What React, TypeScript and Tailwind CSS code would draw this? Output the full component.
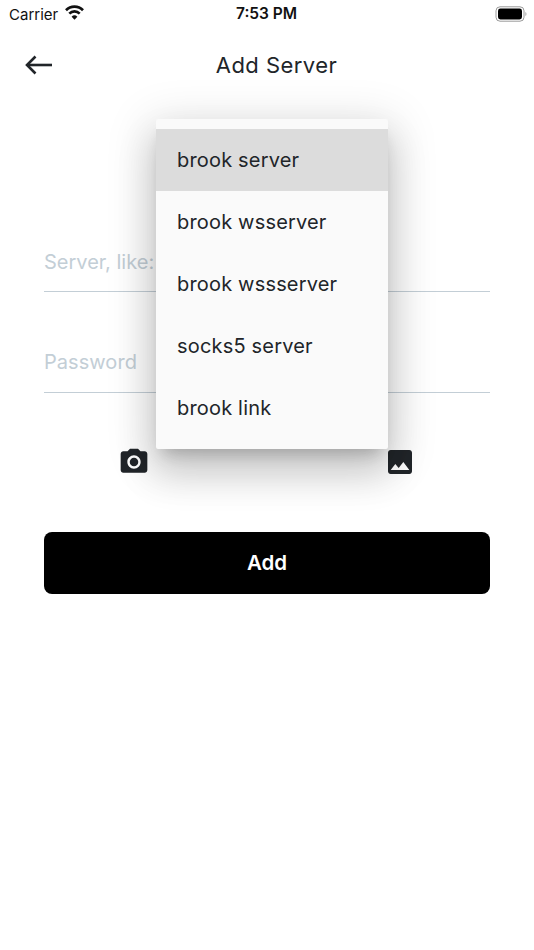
import { MdPhotoCamera, MdImage } from "react-icons/md";

const items = ["brook server", "brook wsserver", "brook wssserver", "socks5 server", "brook link"];

export default function App() {
  return (
    <div className="relative h-[950px] w-[534px] overflow-hidden bg-white text-[#212529]" style={{ fontFamily: "Inter, sans-serif" }}>
      {/* status bar */}
      <div className="relative flex h-[28px] items-center justify-between pl-[9px] pr-[7px]">
        <div className="flex items-center gap-[7px]">
          <span className="text-[15px] leading-none text-[#111]">Carrier</span>
          <svg width="19" height="15" viewBox="0 0 19 15" className="mt-[-3px]" fill="none" stroke="#111" strokeWidth="2.7">
            <path d="M1 5.2 A12 12 0 0 1 18 5.2" />
            <path d="M4.3 8.6 A7.4 7.4 0 0 1 14.7 8.6" />
            <path d="M9.5 14.8 L6.6 11.7 A4.1 4.1 0 0 1 12.4 11.7 Z" fill="#111" stroke="none" />
          </svg>
        </div>
        <span className="absolute left-[236px] top-[6px] text-[15.5px] font-semibold leading-[16px] text-[#111]">7:53 PM</span>
        <svg width="32" height="16" viewBox="0 0 32 16">
          <rect x="1" y="0.8" width="28" height="14.4" rx="4" fill="none" stroke="#9a9a9a" />
          <rect x="3" y="2.6" width="24" height="10.8" rx="2.4" fill="#000" />
          <path d="M30.5 6 C31.7 6.4 31.7 9.6 30.5 10 Z" fill="#8e8e8e" />
        </svg>
      </div>

      {/* app bar */}
      <div className="relative mt-[9px] flex h-[56px] items-center justify-center">
        <svg width="28" height="20" viewBox="0 0 28 20" className="absolute left-[25px] top-[18px]" fill="none" stroke="#212529" strokeWidth="2.6">
          <path d="M27 10 H2.5" />
          <path d="M10.5 1.5 L2 10 L10.5 18.5" />
        </svg>
        <span className="pl-[19px] text-[22px] leading-[28px] tracking-[0.45px]">Add Server</span>
      </div>

      {/* form */}
      <div className="mx-[44px] mt-[153px]">
        <div className="h-[46px] border-b-[1.5px] border-[#c3ced6]">
          <div className="pt-[2px] text-[20px] leading-[28px] text-[#c3ced6]">Server, like: 1.2.3.4:9999</div>
        </div>
        <div className="mt-[55px] h-[46px] border-b-[1.5px] border-[#c3ced6]">
          <div className="pt-[1px] text-[20px] leading-[28px] tracking-[0.05px] text-[#c3ced6]">Password</div>
        </div>

        <div className="mt-[53px] flex justify-between pl-[74px] pr-[74px] text-[#212529]">
          <MdPhotoCamera size={32} />
          <MdImage size={32} />
        </div>

        <button className="mt-[54px] flex h-[62px] w-full items-center justify-center rounded-[8px] bg-black text-[20.5px] font-semibold text-white">
          Add
        </button>
      </div>

      {/* popup menu */}
      <div className="absolute left-[156px] top-[119px] w-[232px] rounded-[2px] bg-[#fafafa] py-[10px] shadow-[0_24px_38px_3px_rgba(0,0,0,0.14),0_9px_46px_8px_rgba(0,0,0,0.12),0_11px_15px_-7px_rgba(0,0,0,0.2)]">
        {items.map((t, i) => (
          <div
            key={t}
            className={`flex h-[62px] items-center pl-[21px] text-[20px] tracking-[0.18px] ${i === 0 ? "bg-[#dcdcdc]" : ""}`}
          >
            {t}
          </div>
        ))}
      </div>
    </div>
  );
}
